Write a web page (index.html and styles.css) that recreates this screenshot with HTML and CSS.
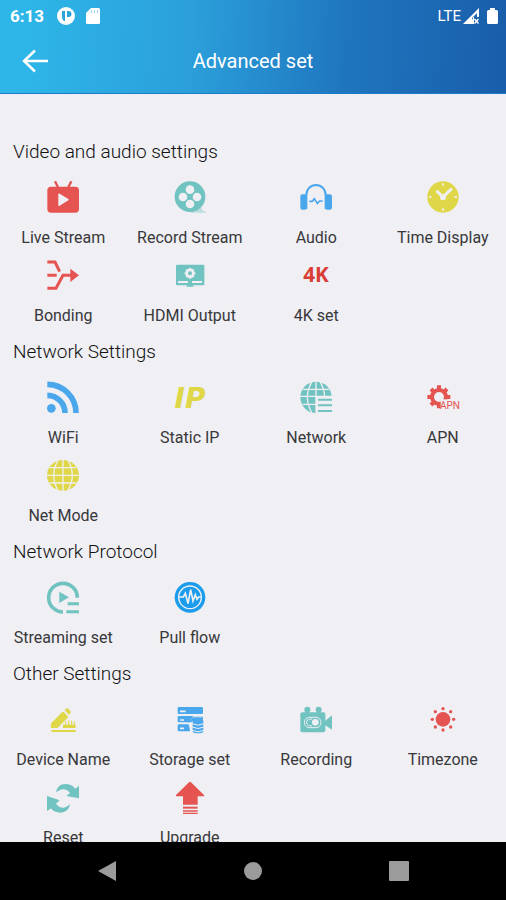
FILE: index.html
```html
<!DOCTYPE html>
<html lang="en">
<head>
<meta charset="utf-8">
<meta name="viewport" content="width=device-width, initial-scale=1">
<title>Advanced set</title>
<link rel="stylesheet" href="styles.css">
</head>
<body>
<header class="top">
  <div class="status">
    <span class="clock">6:13</span>
    <svg class="status-icon" viewBox="0 0 18 18" aria-hidden="true"><circle cx="9" cy="9" r="9" fill="#fff"/><path d="M5 4h3v10H7Q5 13 5 9z" fill="#2aa5dc"/><path d="M10 4h1.500a3 3 0 0 1 0 6H10z" fill="#2aa5dc"/></svg>
    <svg class="status-icon sd" viewBox="0 0 14 16" aria-hidden="true"><path d="M5 0h7.500Q14 0 14 1.500v13q0 1.500-1.500 1.500h-11Q0 16 0 14.500V5z" fill="#fff"/><path d="M5.500 2v3M8.500 2v3M11.500 2v3" stroke="#9bd5ef"/></svg>
    <span class="lte">LTE</span>
    <svg class="signal" viewBox="0 0 16 16" aria-hidden="true"><path d="M0 16 16 0v9h-5v7z" fill="#fff"/><path d="M14 5v4h-4v3l-1-2z" fill="#2068b4"/><path d="m11.500 11 4 4.500m0-4.500-4 4.500" stroke="#fff" stroke-width="1.500"/></svg>
    <svg class="battery" viewBox="0 0 11 16" aria-hidden="true"><path d="M3 0h5v2h1.500Q11 2 11 3.500v11q0 1.500-1.500 1.500h-8Q0 16 0 14.500v-11Q0 2 1.500 2H3z" fill="#fff"/></svg>
  </div>
  <div class="bar">
    <button class="back" aria-label="Back"><svg viewBox="0 0 26 24" aria-hidden="true"><path d="M26 12H2M13 1.500 2 12l11 10.500" fill="none" stroke="#fff" stroke-width="2.500"/></svg></button>
    <h1>Advanced set</h1>
  </div>
</header>

<main>
  <section>
    <h2>Video and audio settings</h2>
    <div class="grid">
      <button class="tile"><svg class="red" viewBox="0 0 96 96" aria-hidden="true"><rect x="1" y="17" width="95" height="78" rx="11"/><path class="line" stroke-width="7" d="m24 1 9 18M73 1l-9 18"/><path class="hole" d="M34 40q0-4 4-2l26 16q3 2 0 4L38 74q-4 2-4-2z"/></svg><span>Live Stream</span></button>
      <button class="tile"><svg class="teal" viewBox="0 0 96 96" aria-hidden="true"><path d="M50 90q22 0 31-12 4 14 15 15v2H50z" opacity=".4"/><circle cx="48" cy="47" r="46"/><g class="hole"><circle cx="48" cy="26" r="13"/><circle cx="27" cy="48" r="13"/><circle cx="69" cy="48" r="13"/><circle cx="48" cy="69" r="13"/></g></svg><span>Record Stream</span></button>
      <button class="tile"><svg class="blue" viewBox="0 0 96 96" aria-hidden="true"><path d="M1 46q0-6 6-6h8q5 0 5 5v36q0 5-5 5H7q-6 0-6-6zM76 45q0-5 5-5h8q7 0 7 6v34q0 6-7 6h-8q-5 0-5-5z"/><path class="line" stroke-width="6" d="M19 84V42a29 30 0 0 1 29-30 29 30 0 0 1 29 30v42"/><path class="line" stroke-width="5" d="M28 61h9l6-8 9 14 7-7h9"/></svg><span>Audio</span></button>
      <button class="tile"><svg class="yellow" viewBox="0 0 96 96" aria-hidden="true"><circle cx="48" cy="48" r="47"/><g class="cut"><path stroke-width="9" stroke-linecap="round" d="M31 32 48 48 72 25"/><path stroke-width="5" d="M48 7v7M48 82v7M6 48h8M82 48h8"/></g><circle class="hole" cx="48" cy="49" r="9"/></svg><span>Time Display</span></button>
      <button class="tile"><svg class="red" viewBox="0 0 96 96" aria-hidden="true"><g class="line" stroke-width="9"><path d="M1 9h23l14 29M1 49h28M1 88h26l21-39h26"/></g><path d="m70 29 26 20-26 20z"/></svg><span>Bonding</span></button>
      <button class="tile"><svg class="teal" viewBox="0 0 96 96" aria-hidden="true"><rect x="6" y="17" width="85" height="62" rx="4"/><circle class="hole" cx="48" cy="43" r="14"/><path class="cut" stroke-width="7" d="M48 27v32M32 43h32M37 32l22 22M59 32 37 54"/><circle cx="48" cy="43" r="6"/><path class="cut" stroke-width="6" d="M12 69h30M54 69h30"/><path d="m36 83 12-15 12 15z"/></svg><span>HDMI Output</span></button>
      <button class="tile"><svg class="glyph red4k" viewBox="0 0 96 96" aria-hidden="true"><text x="48" y="70" text-anchor="middle">4K</text></svg><span>4K set</span></button>
    </div>
  </section>

  <section>
    <h2>Network Settings</h2>
    <div class="grid">
      <button class="tile"><svg class="blue" viewBox="0 0 96 96" aria-hidden="true"><circle cx="13" cy="82" r="13"/><path class="line" stroke-width="17" d="M1 43a53 53 0 0 1 53 53M1 10a86 86 0 0 1 86 86"/></svg><span>WiFi</span></button>
      <button class="tile"><svg class="glyph ip" viewBox="0 0 96 96" aria-hidden="true"><text x="48" y="80" text-anchor="middle">IP</text></svg><span>Static IP</span></button>
      <button class="tile"><svg class="teal" viewBox="0 0 96 96" aria-hidden="true"><circle cx="48" cy="49" r="47"/><path class="cut" stroke-width="4" d="M48 0v98M8 25h80M0 46h96M8 70h80M36 2Q8 49 36 96M60 2q28 47 0 94"/><path class="hole" d="M48 48h48v48H48z"/><path class="line" stroke-width="6" d="M54 56h42M54 73h42M54 90h42"/></svg><span>Network</span></button>
      <button class="tile"><svg class="red" viewBox="0 0 96 96" aria-hidden="true"><circle class="line" cx="36" cy="48" r="21" stroke-width="12"/><path class="line" stroke-width="12" d="M36 28V13M36 68v14M16 48H1M56 48h14M21 33l-9-9M51 33l9-9M21 63l-9 9"/><path class="hole" d="M41 55h55v41H41z"/><text class="apn" x="69" y="84" text-anchor="middle">APN</text></svg><span>APN</span></button>
      <button class="tile"><svg class="yellow" viewBox="0 0 96 96" aria-hidden="true"><ellipse cx="48" cy="49" rx="48" ry="46"/><path class="cut" stroke-width="4" d="M48 0v98M8 26h80M0 49h96M8 72h80M34 2Q6 49 34 96M62 2q28 47 0 94"/></svg><span>Net Mode</span></button>
    </div>
  </section>

  <section>
    <h2>Network Protocol</h2>
    <div class="grid">
      <button class="tile"><svg class="teal" viewBox="0 0 96 96" aria-hidden="true"><path class="line" stroke-width="11" d="M91 50a43 43 0 1 0-43 43"/><path d="m37 32 29 17-29 17z"/><path class="line" stroke-width="9" d="M62 68h34M58 92h38"/></svg><span>Streaming set</span></button>
      <button class="tile"><svg class="bright" viewBox="0 0 96 96" aria-hidden="true"><circle cx="48" cy="49" r="46"/><circle class="cut" cx="48" cy="49" r="34" stroke-width="4"/><path class="cut" stroke-width="5" d="M14 48h14l6-11 8 31 8-42 7 34 7-19 5 14 5-7h8"/></svg><span>Pull flow</span></button>
    </div>
  </section>

  <section>
    <h2>Other Settings</h2>
    <div class="grid">
      <button class="tile"><svg class="yellow" viewBox="0 0 96 96" aria-hidden="true"><path d="m12 61 33-33q3-3 6 0l11 11q2 3 0 5L32 75H12zM53 22l4-5q4-3 8 1l5 6q3 4 0 7l-4 4z"/><path class="line" stroke-width="6" d="M13 84h73"/><path class="line" stroke-width="10" d="M48 70h38"/><path class="line" stroke-width="3" d="M56 66V54M65 66V52M74 66V52M82 66V54"/></svg><span>Device Name</span></button>
      <button class="tile"><svg class="blue" viewBox="0 0 96 96" aria-hidden="true"><rect x="11" y="12" width="76" height="21" rx="4"/><rect x="11" y="39" width="76" height="19" rx="4"/><rect x="11" y="64" width="40" height="21" rx="4"/><path class="cut" stroke-width="5" d="M18 25h17M18 51h12M18 76h12"/><path class="hole" d="M44 64 57 40h39v56H51z"/><path d="M36 58q14 0 20-15h31v7H62l-10 8z"/><path d="M56 54q0-7 16-7t16 7v31q0 6-16 6t-16-6z"/><path class="cut" stroke-width="3" d="M54 62q18 9 36 0M54 72q18 9 36 0M54 82q18 9 36 0"/></svg><span>Storage set</span></button>
      <button class="tile"><svg class="teal" viewBox="0 0 96 96" aria-hidden="true"><rect x="1" y="28" width="75" height="60" rx="6"/><circle cx="22" cy="20" r="9"/><circle cx="56" cy="20" r="9"/><path d="M18 20h8v12h-8zM52 20h8v12h-8zM75 54l21-17v43L75 66z"/><rect class="cut" x="13" y="43" width="50" height="31" rx="15" stroke-width="3"/><path class="cut" stroke-width="3" d="M36 48q-18 0-16 12 1 9 16 9"/><circle class="hole" cx="46" cy="58" r="10"/></svg><span>Recording</span></button>
      <button class="tile"><svg class="red" viewBox="0 0 96 96" aria-hidden="true"><circle cx="48" cy="49" r="22"/><circle cx="48" cy="17" r="5"/><circle cx="48" cy="81" r="5"/><circle cx="16" cy="49" r="5"/><circle cx="80" cy="49" r="5"/><circle cx="25" cy="26" r="5"/><circle cx="71" cy="26" r="5"/><circle cx="25" cy="72" r="5"/><circle cx="71" cy="72" r="5"/></svg><span>Timezone</span></button>
      <button class="tile"><svg class="teal" viewBox="0 0 96 96" aria-hidden="true"><path d="M27 34Q32 9 55 9q20 0 29 14l12-8v37l-38-7 11-9Q59 23 46 25q-8 1-19 9z"/><path d="M69 70Q64 95 41 95q-20 0-29-13L0 90V45l38 13-11 10q10 13 23 12 8-1 19-10z"/></svg><span>Reset</span></button>
      <button class="tile"><svg class="red" viewBox="0 0 96 96" aria-hidden="true"><path d="M45 4q3-3 6 0l39 38q2 4-2 4H71v25H27V46H8q-4 0-2-4z"/><path class="line" stroke-width="6" d="M27 80h44"/><path class="line" stroke-width="4" d="M27 90h44M27 97h44"/></svg><span>Upgrade</span></button>
    </div>
  </section>
</main>

<nav class="system">
  <button aria-label="Back"><svg viewBox="0 0 20 20" aria-hidden="true"><path d="M19 0v20L1 10z"/></svg></button>
  <button aria-label="Home"><svg viewBox="0 0 20 20" aria-hidden="true"><circle cx="10" cy="10" r="9"/></svg></button>
  <button aria-label="Recent apps"><svg viewBox="0 0 20 20" aria-hidden="true"><rect width="20" height="20" rx="1"/></svg></button>
</nav>
</body>
</html>
```
FILE: styles.css
```css
* { box-sizing: border-box; }

body {
  margin: 0;
  height: 100vh;
  display: flex;
  flex-direction: column;
  background: #efeff4;
  color: #38383b;
  font-family: Roboto, "Liberation Sans", sans-serif;
}

button {
  margin: 0;
  padding: 0;
  border: 0;
  background: none;
  color: inherit;
  font: inherit;
  cursor: pointer;
}

svg { display: block; flex: none; }

/* Header */
.top {
  flex: none;
  color: #fff;
  background: linear-gradient(93deg, #2eb6e8 5%, #2b9fda 38%, #1f76bf 68%, #195daa);
  border-bottom: 1px solid #1c7cc4;
}

.status {
  display: flex;
  align-items: center;
  height: 32px;
  padding: 0 8px 0 10px;
}

.clock { font-size: 17px; font-weight: 700; margin-right: 13px; }
.status-icon { width: 18px; height: 18px; margin-right: 11px; }
.sd { width: 14px; height: 16px; }
.lte { margin-left: auto; font-size: 15px; }
.signal { width: 16px; height: 16px; margin: 0 8px 0 2px; }
.battery { width: 11px; height: 16px; }

.bar {
  display: grid;
  grid-template-columns: 72px 1fr 72px;
  align-items: center;
  height: 61px;
  padding-bottom: 4px;
}

.back { padding-left: 22px; }
.back svg { width: 26px; height: 24px; }
h1 { margin: 0; font-size: 20px; font-weight: 400; text-align: center; }

/* Settings */
main {
  flex: 1;
  min-height: 0;
  overflow: hidden;
  padding-top: 36px;
}

h2 {
  margin: 0;
  padding-left: 13px;
  font-size: 19px;
  line-height: 44px;
  font-weight: 300;
  color: #111;
}

.grid {
  display: grid;
  grid-template-columns: repeat(4, 1fr);
  grid-auto-rows: 78px;
}

.tile {
  display: flex;
  flex-direction: column;
  align-items: center;
  gap: 15px;
  padding-top: 7px;
  font-size: 16px;
  line-height: 20px;
  white-space: nowrap;
}

.tile svg { width: 32px; height: 32px; overflow: visible; }

.red { color: #e65451; }
.teal { color: #70c3c0; }
.blue { color: #4ba7ec; }
.yellow { color: #dfd747; }
.bright { color: #1c9cec; }

.tile svg { fill: currentColor; }
.tile .line { fill: none; stroke: currentColor; }
.tile .cut { fill: none; stroke: #efeff4; }
.tile .hole { fill: #efeff4; }

.glyph { font-family: "Noto Sans", sans-serif; font-weight: 700; }
.tile .red4k { color: #d93d35; font-size: 62px; }
.tile .ip { color: #dfd747; font-family: "DejaVu Sans", sans-serif; font-size: 84px; font-style: italic; }
.apn { font-size: 30px; }

/* System navigation */
.system {
  flex: none;
  display: flex;
  justify-content: center;
  gap: 126px;
  height: 58px;
  background: #000;
}

.system svg { width: 20px; height: 20px; fill: #9b9b9b; }
```
